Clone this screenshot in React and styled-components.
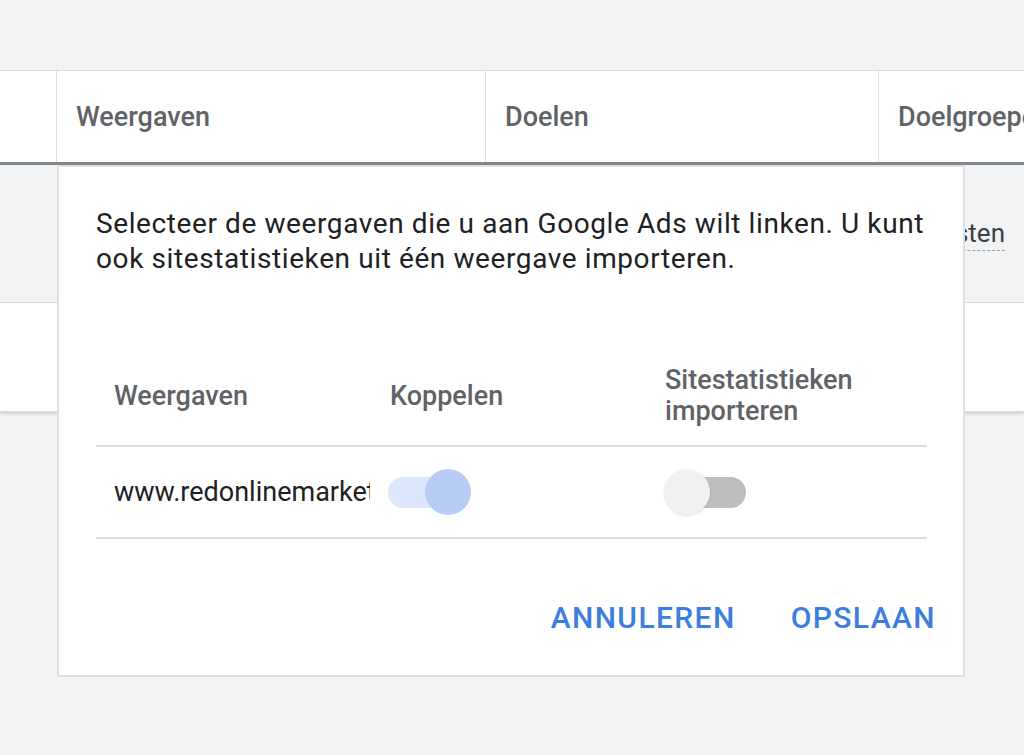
import React, { useState } from 'react';
import styled, { createGlobalStyle } from 'styled-components';

const GlobalStyle = createGlobalStyle`
  body {
    margin: 0;
    background: #f1f3f4;
    font-family: Roboto, "Liberation Sans", Arial, sans-serif;
  }
`;

const Page = styled.div`
  position: relative;
  width: 1024px;
  height: 755px;
  overflow: hidden;
  background: #f1f3f4;
  padding-top: 70px;
  box-sizing: border-box;
`;

const HeaderRow = styled.div`
  display: grid;
  grid-template-columns: 56px 429px 393px 1fr;
  background: #fff;
  border-top: 1px solid #dadce0;
  border-bottom: 3px solid #80868b;
  box-sizing: border-box;
  height: 95px;
`;

const HeaderCell = styled.div`
  display: flex;
  align-items: center;
  padding-left: 19px;
  border-left: ${(p) => (p.first ? 'none' : '1px solid #dadce0')};
  font-size: 27px;
  font-weight: 500;
  color: #5f6368;
  white-space: nowrap;
  overflow: hidden;
`;

const BodyRow = styled.div`
  display: grid;
  grid-template-columns: 56px 429px 393px 1fr;
  height: ${(p) => p.h}px;
  background: ${(p) => (p.white ? '#fff' : '#f1f3f4')};
  border-bottom: 1px solid #dadce0;
  box-shadow: ${(p) => (p.white ? '0 2px 3px rgba(60, 64, 67, 0.2)' : 'none')};
  box-sizing: border-box;
`;

const BodyCell = styled.div`
  display: flex;
  align-items: center;
  justify-content: ${(p) => (p.right ? 'flex-end' : 'flex-start')};
  padding: 0 19px 0 20px;
  font-size: 26px;
  color: #3c4043;
  white-space: nowrap;
  overflow: hidden;
`;

const DottedText = styled.span`
  border-bottom: 1px dashed #9aa0a6;
  line-height: 33px;
`;

const Dialog = styled.div`
  position: absolute;
  left: 57px;
  top: 165px;
  width: 908px;
  height: 512px;
  background: #fff;
  border: 2px solid #e0e0e0;
  box-sizing: border-box;
  padding: 39px 36px 0 37px;
  display: flex;
  flex-direction: column;
`;

const Intro = styled.p`
  margin: 0;
  font-size: 28px;
  line-height: 35px;
  letter-spacing: 0.6px;
  color: #202124;
`;

const Table = styled.div`
  margin-top: 71px;
  display: flex;
  flex-direction: column;
`;

const TableRow = styled.div`
  display: grid;
  grid-template-columns: 276px 275px 1fr;
  height: ${(p) => p.h}px;
  border-bottom: 2px solid #dadce0;
  box-sizing: border-box;
`;

const Th = styled.div`
  display: flex;
  align-items: center;
  padding-left: 18px;
  font-size: 27px;
  line-height: 31px;
  font-weight: 500;
  color: #5f6368;
`;

const Td = styled.div`
  display: flex;
  align-items: center;
  padding-left: 18px;
  font-size: 27px;
  color: #202124;
  min-width: 0;
`;

const Clip = styled.span`
  display: block;
  overflow: hidden;
  white-space: nowrap;
  width: 256px;
`;

const Track = styled.button`
  position: relative;
  width: 80px;
  height: 31px;
  border: none;
  padding: 0;
  margin-left: ${(p) => (p.on ? '-2px' : '1px')};
  border-radius: 16px;
  background: ${(p) => (p.on ? '#dde7fb' : '#bdbdbd')};
  cursor: pointer;
`;

const Thumb = styled.span`
  position: absolute;
  top: 50%;
  left: ${(p) => (p.on ? '37px' : '-2px')};
  width: 46px;
  height: 46px;
  margin-top: -23px;
  border-radius: 50%;
  background: ${(p) => (p.on ? '#b7cdf5' : '#f1f1f1')};
  box-shadow: ${(p) => (p.on ? 'none' : '0 1px 2px rgba(0,0,0,0.12)')};
`;

const Actions = styled.div`
  display: flex;
  justify-content: flex-end;
  gap: 55px;
  padding: 61px 0 0 0;
  margin-right: -9px;
`;

const TextButton = styled.button`
  border: none;
  background: none;
  padding: 0;
  font-family: Roboto, "Liberation Sans", Arial, sans-serif;
  font-size: 30px;
  font-weight: 500;
  letter-spacing: 1.4px;
  color: #3b7ee0;
  cursor: pointer;
`;

const Toggle = ({ on, onClick }) => (
  <Track on={on} onClick={onClick}>
    <Thumb on={on} />
  </Track>
);

const App = () => {
  const [link, setLink] = useState(true);
  const [importStats, setImportStats] = useState(false);

  return (
    <Page>
      <GlobalStyle />
      <HeaderRow>
        <HeaderCell first />
        <HeaderCell>Weergaven</HeaderCell>
        <HeaderCell>Doelen</HeaderCell>
        <HeaderCell>Doelgroepen</HeaderCell>
      </HeaderRow>
      <BodyRow h={138}>
        <BodyCell />
        <BodyCell />
        <BodyCell />
        <BodyCell right>
          <DottedText>Lijsten</DottedText>
        </BodyCell>
      </BodyRow>
      <BodyRow h={109} white>
        <BodyCell />
        <BodyCell />
        <BodyCell />
        <BodyCell />
      </BodyRow>

      <Dialog>
        <Intro>
          Selecteer de weergaven die u aan Google Ads wilt linken. U kunt
          ook sitestatistieken uit één weergave importeren.
        </Intro>
        <Table>
          <TableRow h={100}>
            <Th>Weergaven</Th>
            <Th>Koppelen</Th>
            <Th>
              Sitestatistieken
              <br />
              importeren
            </Th>
          </TableRow>
          <TableRow h={92}>
            <Td>
              <Clip>www.redonlinemarketing.nl</Clip>
            </Td>
            <Td>
              <Toggle on={link} onClick={() => setLink(!link)} />
            </Td>
            <Td>
              <Toggle on={importStats} onClick={() => setImportStats(!importStats)} />
            </Td>
          </TableRow>
        </Table>
        <Actions>
          <TextButton>ANNULEREN</TextButton>
          <TextButton>OPSLAAN</TextButton>
        </Actions>
      </Dialog>
    </Page>
  );
};

export default App;
